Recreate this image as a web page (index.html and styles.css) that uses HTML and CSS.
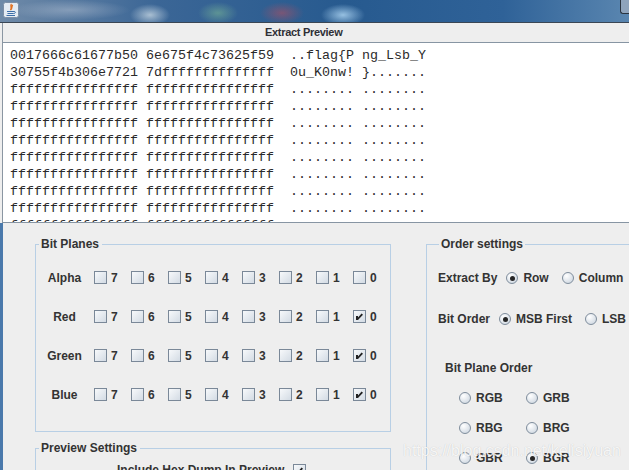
FILE: index.html
```html
<!DOCTYPE html>
<html lang="en">
  <head>
    <meta charset="UTF-8" />
    <meta name="viewport" content="width=device-width, initial-scale=1.0" />
    <title>Extract Preview</title>
    <link rel="stylesheet" href="styles.css">
  </head>
  <body>
    <!-- Barra de titulo -->
    <div class="titlebar">
      <svg class="app-icon" width="16" height="16" viewBox="0 0 16 16">
        <rect x="0.5" y="0.5" width="15" height="15" rx="2" fill="#e4ebf3" stroke="#7d8fa6" />
        <path d="M8.5 2 C6.5 4 9.5 5 7.5 8 C10 6 8 4.5 9.8 3" fill="none" stroke="#e2701e" stroke-width="1.3" />
        <path d="M4 9.5 H11 M4.5 11.5 H10.5 M3.5 13.5 H12" stroke="#3c6ea8" stroke-width="1.1" />
        <path d="M11 9.5 C13 9.5 13 11.5 10.5 11.5" fill="none" stroke="#3c6ea8" stroke-width="1" />
      </svg>
      <div class="title-btn"></div>
    </div>

    <div class="window">
      <div class="preview-title">Extract Preview</div>
<pre class="preview">0017666c61677b50 6e675f4c73625f59  ..flag{P ng_Lsb_Y
30755f4b306e7721 7dffffffffffffff  0u_K0nw! }.......
ffffffffffffffff ffffffffffffffff  ........ ........
ffffffffffffffff ffffffffffffffff  ........ ........
ffffffffffffffff ffffffffffffffff  ........ ........
ffffffffffffffff ffffffffffffffff  ........ ........
ffffffffffffffff ffffffffffffffff  ........ ........
ffffffffffffffff ffffffffffffffff  ........ ........
ffffffffffffffff ffffffffffffffff  ........ ........
ffffffffffffffff ffffffffffffffff  ........ ........
ffffffffffffffff ffffffffffffffff  ........ ........</pre>

      <div class="settings">
        <div class="col-left">
          <!-- Bit Planes -->
          <fieldset class="group bit-planes">
            <legend>Bit Planes</legend>
            <div class="plane-row">
              <span class="plane-name">Alpha</span>
              <div class="bits">
                <span class="bit"><span class="check"></span>7</span>
                <span class="bit"><span class="check"></span>6</span>
                <span class="bit"><span class="check"></span>5</span>
                <span class="bit"><span class="check"></span>4</span>
                <span class="bit"><span class="check"></span>3</span>
                <span class="bit"><span class="check"></span>2</span>
                <span class="bit"><span class="check"></span>1</span>
                <span class="bit"><span class="check"></span>0</span>
              </div>
            </div>
            <div class="plane-row">
              <span class="plane-name">Red</span>
              <div class="bits">
                <span class="bit"><span class="check"></span>7</span>
                <span class="bit"><span class="check"></span>6</span>
                <span class="bit"><span class="check"></span>5</span>
                <span class="bit"><span class="check"></span>4</span>
                <span class="bit"><span class="check"></span>3</span>
                <span class="bit"><span class="check"></span>2</span>
                <span class="bit"><span class="check"></span>1</span>
                <span class="bit"><span class="check checked"><svg width="13" height="13" viewBox="0 0 13 13"><polygon points="3,6 5,6 5,7.6 8.6,3.6 10,4.8 5,10 3,10" fill="#222" /></svg></span>0</span>
              </div>
            </div>
            <div class="plane-row">
              <span class="plane-name">Green</span>
              <div class="bits">
                <span class="bit"><span class="check"></span>7</span>
                <span class="bit"><span class="check"></span>6</span>
                <span class="bit"><span class="check"></span>5</span>
                <span class="bit"><span class="check"></span>4</span>
                <span class="bit"><span class="check"></span>3</span>
                <span class="bit"><span class="check"></span>2</span>
                <span class="bit"><span class="check"></span>1</span>
                <span class="bit"><span class="check checked"><svg width="13" height="13" viewBox="0 0 13 13"><polygon points="3,6 5,6 5,7.6 8.6,3.6 10,4.8 5,10 3,10" fill="#222" /></svg></span>0</span>
              </div>
            </div>
            <div class="plane-row">
              <span class="plane-name">Blue</span>
              <div class="bits">
                <span class="bit"><span class="check"></span>7</span>
                <span class="bit"><span class="check"></span>6</span>
                <span class="bit"><span class="check"></span>5</span>
                <span class="bit"><span class="check"></span>4</span>
                <span class="bit"><span class="check"></span>3</span>
                <span class="bit"><span class="check"></span>2</span>
                <span class="bit"><span class="check"></span>1</span>
                <span class="bit"><span class="check checked"><svg width="13" height="13" viewBox="0 0 13 13"><polygon points="3,6 5,6 5,7.6 8.6,3.6 10,4.8 5,10 3,10" fill="#222" /></svg></span>0</span>
              </div>
            </div>
          </fieldset>

          <!-- Preview Settings -->
          <fieldset class="group preview-settings">
            <legend>Preview Settings</legend>
            <div class="hex-row">
              Include Hex Dump In Preview
              <span class="check checked"><svg width="13" height="13" viewBox="0 0 13 13"><polygon points="3,6 5,6 5,7.6 8.6,3.6 10,4.8 5,10 3,10" fill="#222" /></svg></span>
            </div>
          </fieldset>
        </div>

        <!-- Order settings -->
        <fieldset class="group order">
          <legend>Order settings</legend>
          <div class="order-row">
            <span>Extract By</span>
            <span class="opt"><span class="radio selected"></span>Row</span>
            <span class="opt"><span class="radio"></span>Column</span>
          </div>
          <div class="order-row">
            <span>Bit Order</span>
            <span class="opt"><span class="radio selected"></span>MSB First</span>
            <span class="opt"><span class="radio"></span>LSB First</span>
          </div>
          <div class="plane-order">
            <div class="plane-order-title">Bit Plane Order</div>
            <div class="plane-grid">
              <span class="opt"><span class="radio"></span>RGB</span>
              <span class="opt"><span class="radio"></span>GRB</span>
              <span class="opt"><span class="radio"></span>RBG</span>
              <span class="opt"><span class="radio"></span>BRG</span>
              <span class="opt"><span class="radio"></span>GBR</span>
              <span class="opt"><span class="radio selected"></span>BGR</span>
            </div>
          </div>
        </fieldset>
      </div>
    </div>

    <div class="watermark">https://blog.csdn.net/kelisiyuan</div>
  </body>
</html>
```

FILE: styles.css
```css
body {
  margin: 0;
  width: 629px;
  height: 470px;
  overflow: hidden;
  position: relative;
  background-color: #eeeeee;
  font-family: "Liberation Sans", Arial, sans-serif;
  font-size: 12px;
  font-weight: bold;
  color: #333;
}
.titlebar {
  height: 22px;
  display: flex;
  justify-content: space-between;
  align-items: flex-start;
  background:
    radial-gradient(ellipse 20px 11px at 150px 15px, rgba(205, 220, 230, 0.75), transparent),
    radial-gradient(ellipse 20px 11px at 218px 13px, rgba(120, 180, 150, 0.6), transparent),
    radial-gradient(ellipse 22px 11px at 282px 13px, rgba(170, 80, 100, 0.6), transparent),
    radial-gradient(ellipse 22px 11px at 343px 15px, rgba(170, 210, 240, 0.85), transparent),
    radial-gradient(ellipse 60px 10px at 70px 10px, rgba(170, 185, 205, 0.55), transparent),
    linear-gradient(90deg, #6f8aa8 0%, #3b6696 25%, #275a8f 55%, #2f6298 80%, #5a86b0 100%);
}
.app-icon {
  margin: 2px 0 0 3px;
}
.title-btn {
  width: 8px;
  height: 13px;
  border: 1px solid #2a3440;
  border-right: none;
  border-top: none;
  border-radius: 0 0 0 3px;
  background-color: #8fa4bc;
}
.window {
  border-top: 1px solid #3a4654;
}
.preview-title {
  height: 19px;
  line-height: 19px;
  padding-left: 262px;
  margin-left: 2px;
  border-left: 1px solid #8a96a2;
  font-size: 11px;
  letter-spacing: -0.3px;
  color: #2e3036;
}
.preview {
  margin: 0 0 0 2px;
  height: 175px;
  padding: 4px 0 0 7px;
  border-top: 1px solid #8795a3;
  border-bottom: 1px solid #8795a3;
  border-left: 1px solid #8a96a2;
  background-color: #fff;
  overflow: hidden;
  font-family: "Liberation Mono", "Courier New", monospace;
  font-size: 13.33px;
  font-weight: normal;
  line-height: 17px;
  color: #2a2a2a;
}
.settings {
  display: flex;
  align-items: flex-start;
  padding: 14px 0 0 32px;
  border-left: 3px solid #4a79ab;
  height: 240px;
}
.group {
  margin: 0;
  padding: 0;
  min-width: 0;
  border: 1px solid #b8cfe5;
}
.group legend {
  margin-left: 3px;
  padding: 0 3px 0 2px;
  line-height: 14px;
}
.bit-planes {
  width: 356px;
  box-sizing: border-box;
  padding: 7px 0 17px;
}
.plane-row {
  display: flex;
  align-items: center;
  height: 39px;
  padding-left: 8px;
}
.plane-name {
  width: 41px;
  text-align: center;
}
.bits {
  display: flex;
  margin-left: 9px;
}
.bit {
  display: flex;
  align-items: center;
  width: 37px;
  flex-shrink: 0;
}
.check {
  display: inline-block;
  width: 11px;
  height: 11px;
  margin-right: 4px;
  border: 1px solid #7a8898;
  background: linear-gradient(135deg, #f7f9fb, #d3dbe4);
  position: relative;
}
.check svg {
  position: absolute;
  left: -1px;
  top: -1px;
}
.preview-settings {
  width: 356px;
  box-sizing: border-box;
  margin-top: 9px;
  padding: 5px 0 10px;
}
.hex-row {
  display: flex;
  align-items: center;
  height: 20px;
  padding-left: 81px;
}
.hex-row .check {
  margin: 0 0 0 9px;
}
.order {
  width: 260px;
  flex-shrink: 0;
  margin-left: 35px;
  padding: 17px 0 0 11px;
  height: 260px;
}
.group.order legend {
  margin-left: 1px;
  padding: 0 2px;
}
.order-row {
  display: flex;
  align-items: center;
  height: 20px;
  margin-bottom: 21px;
  white-space: nowrap;
}
.order-row .opt {
  margin-left: 13px;
}
.order-row span:nth-child(2) {
  margin-left: 9px;
}
.opt {
  display: flex;
  align-items: center;
}
.radio {
  display: inline-block;
  width: 10px;
  height: 10px;
  margin-right: 5px;
  border: 1px solid #7f8d9c;
  border-radius: 50%;
  background: radial-gradient(circle at 35% 30%, #ffffff, #d2dae3 80%);
  position: relative;
}
.radio.selected::after {
  content: "";
  position: absolute;
  left: 2.5px;
  top: 2.5px;
  width: 5px;
  height: 5px;
  border-radius: 50%;
  background-color: #262626;
}
.plane-order {
  margin-top: 29px;
}
.plane-order-title {
  height: 20px;
  line-height: 20px;
  padding-left: 7px;
}
.plane-grid {
  display: grid;
  grid-template-columns: 67px 67px;
  grid-auto-rows: 20px;
  row-gap: 10px;
  margin-top: 10px;
  padding-left: 21px;
}
.watermark {
  position: absolute;
  left: 403px;
  top: 442px;
  font-size: 16px;
  font-weight: normal;
  color: rgba(255, 255, 255, 0.85);
  text-shadow: 0 0 1px rgba(0, 0, 0, 0.2);
}
```
